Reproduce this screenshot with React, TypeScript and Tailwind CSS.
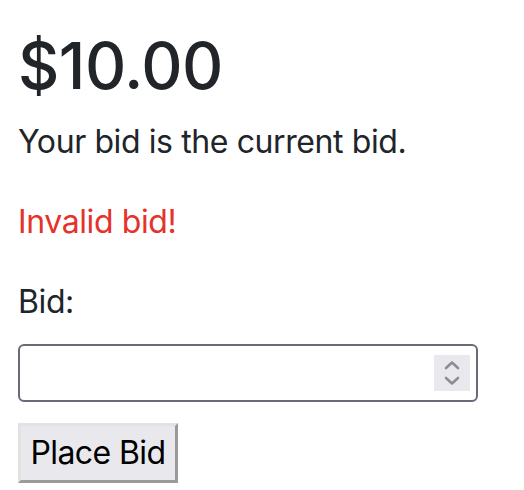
import React from "react";

export default function App() {
  return (
    <div
      className="w-[524px] h-[490px] bg-white pl-[18px] pt-[27px] text-[#212529]"
      style={{ fontFamily: "Inter, 'Liberation Sans', sans-serif" }}
    >
      <h1 className="text-[64px] leading-[77px] font-medium tracking-[-0.5px] m-0">$10.00</h1>
      <p className="text-[32px] leading-[48px] mt-[14px] tracking-[-0.4px]">Your bid is the current bid.</p>
      <p className="text-[32px] leading-[48px] mt-[32px] tracking-[-0.4px] text-[#e5322a]">Invalid bid!</p>
      <div className="text-[32px] leading-[48px] mt-[32px] tracking-[-0.4px]">Bid:</div>
      <div className="mt-[18px] w-[460px] h-[58px] border-2 border-[#6b6878] rounded-[6px] flex items-center justify-end pr-[6px]">
        <div className="w-[36px] h-[36px] bg-[#e9e8ed] flex items-center justify-center">
          <svg width="20" height="30" viewBox="0 0 20 30" fill="none" stroke="#8e8c96" strokeWidth="2.6" strokeLinecap="round" strokeLinejoin="round">
            <path d="M4 10 L10 4.5 L16 10" />
            <path d="M4 20 L10 25.5 L16 20" />
          </svg>
        </div>
      </div>
      <button className="mt-[21px] h-[60px] w-[160px] px-0 flex items-center justify-center whitespace-nowrap bg-[#e9e9ed] text-black text-[32px] tracking-[-0.6px] leading-none border-[3px] border-t-[#e2e2e2] border-l-[#e2e2e2] border-b-[#9a9a9a] border-r-[#9a9a9a]">
        Place Bid
      </button>
    </div>
  );
}
